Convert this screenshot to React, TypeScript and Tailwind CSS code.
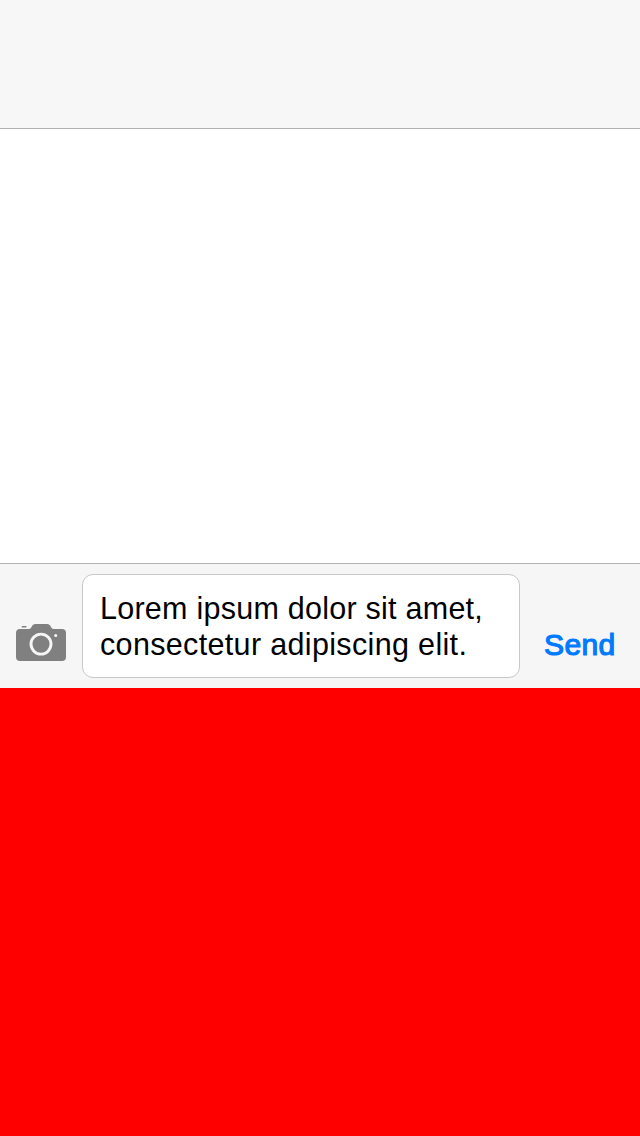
function CameraIcon() {
  return (
    <svg width="50" height="37" viewBox="0 0 50 37" className="block">
      <path
        fill="#808080"
        d="M4 5H12.6C14.2 5 14.9 4 15.6 2.7C16.6 0.8 17.5 0 19.5 0H31C33 0 33.9 0.8 34.9 2.7C35.6 4 36.3 5 37.8 5H46Q50 5 50 9V33Q50 37 46 37H4Q0 37 0 33V9Q0 5 4 5Z"
      />
      <rect x="5.7" y="2" width="4.8" height="1.6" rx="0.5" fill="#808080" />
      <circle cx="25" cy="20.1" r="10" fill="none" stroke="#f6f6f6" strokeWidth="2.9" />
      <circle cx="39.7" cy="11.6" r="1.5" fill="#f6f6f6" />
    </svg>
  );
}

export default function App() {
  return (
    <div className="flex h-[1136px] w-[640px] flex-col overflow-hidden bg-white font-['Liberation_Sans',Arial,sans-serif]">
      <header className="h-[129px] shrink-0 border-b border-[#b2b2b2] bg-[#f7f7f7]" />
      <main className="flex-1 bg-white" />
      <div className="flex h-[125px] shrink-0 items-end border-t border-[#b2b2b2] bg-[#f6f6f6] pb-[10px] pl-4">
        <button aria-label="Camera" className="mb-[17px] w-[50px] shrink-0">
          <CameraIcon />
        </button>
        <div className="ml-4 h-[104px] w-[438px] shrink-0 whitespace-nowrap rounded-[11px] border border-[#c8c8c8] bg-white pl-[17px] pt-[15px] text-[30.5px] leading-[36px] text-black">
          <div className="tracking-[0.25px]">Lorem ipsum dolor sit amet,</div>
          <div className="tracking-[0.34px]">consectetur adipiscing elit.</div>
        </div>
        <button className="mb-[15px] ml-[24px] text-[30px] leading-[36px] tracking-[0.4px] text-[#007aff] [-webkit-text-stroke:1.2px_#007aff]">
          Send
        </button>
      </div>
      <section className="h-[448px] shrink-0 bg-[#ff0000]" />
    </div>
  );
}
